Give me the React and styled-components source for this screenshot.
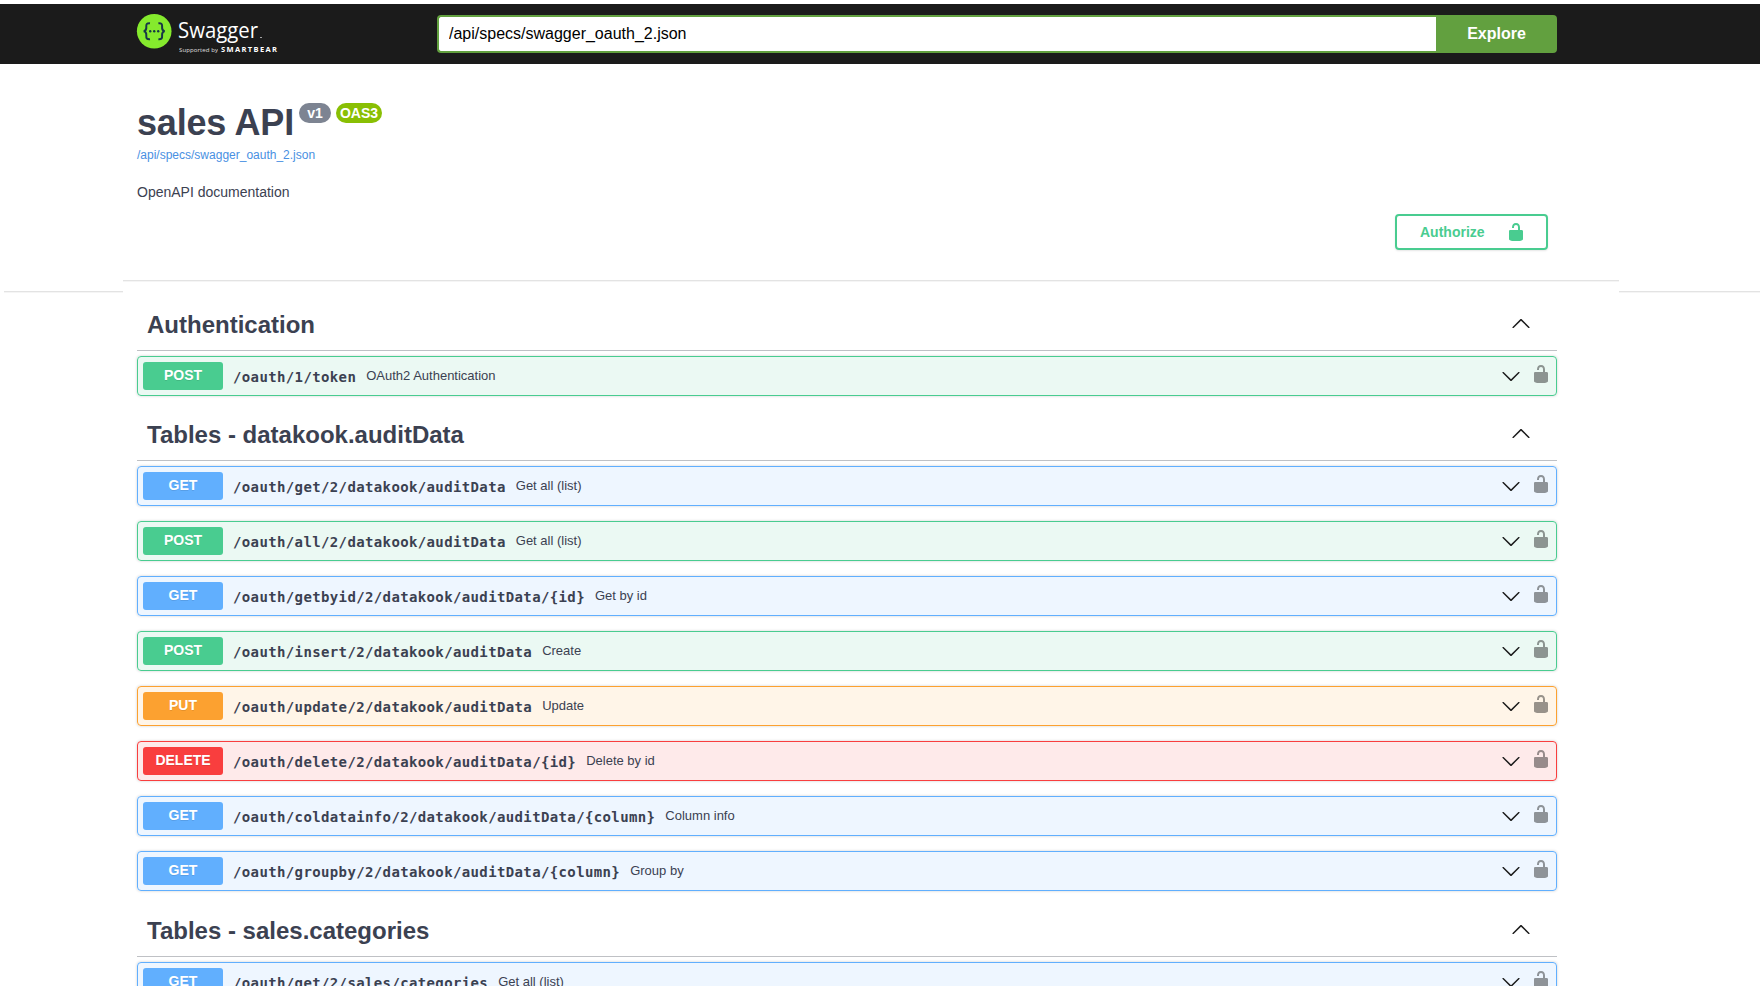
import styled, { createGlobalStyle } from "styled-components";

const GlobalStyle = createGlobalStyle`
    * {
        box-sizing: border-box;
    }
    body {
        margin: 0;
        background: #fff;
        color: #3b4151;
        font-family: "Liberation Sans", Arial, sans-serif;
    }
`

const Page = styled.div`
    height: 990px;
    padding: 4px 0;
    overflow: hidden;
`

const Clip = styled.div`
    height: 982px;
    overflow: hidden;
`

const Topbar = styled.header`
    display: flex;
    align-items: center;
    height: 60px;
    padding: 0 203px 0 136px;
    background: #1b1b1b;
`

const Logo = styled.svg`
    flex: none;
    width: 301px;
    height: 60px;
`

const UrlInput = styled.input`
    flex: 1;
    height: 38px;
    padding: 0 10px 1px;
    border: 2px solid #62a03f;
    border-right: 0;
    border-radius: 4px 0 0 4px;
    outline: none;
    background: #fff;
    color: #000;
    font: 16px "Liberation Sans", Arial, sans-serif;
`

const ExploreButton = styled.button`
    width: 121px;
    height: 38px;
    padding: 0 0 1px;
    border: 0;
    border-radius: 0 4px 4px 0;
    background: #62a03f;
    color: #fff;
    font: bold 16px "Liberation Sans", Arial, sans-serif;
`

const Info = styled.section`
    height: 150px;
    padding: 38px 137px 0;
`

const TitleRow = styled.div`
    display: flex;
    align-items: flex-start;
    height: 42px;
`

const Title = styled.h1`
    margin: 0;
    font-size: 36px;
    line-height: 42px;
    letter-spacing: -0.2px;
`

const Badge = styled.span`
    width: ${props => props.$width}px;
    height: 20px;
    margin: 1px 0 0 5px;
    border-radius: 20px;
    background: ${props => props.$color};
    color: #fff;
    font-size: 14px;
    font-weight: bold;
    line-height: 20px;
    text-align: center;
`

const SpecLink = styled.a`
    display: block;
    margin-top: 4px;
    color: #4990e2;
    font-size: 12px;
    line-height: 14px;
    text-decoration: none;
`

const Description = styled.p`
    margin: 21px 0 0;
    font-size: 14px;
    line-height: 18px;
`

const AuthBar = styled.section`
    display: flex;
    justify-content: flex-end;
    height: 66px;
    padding-right: 212px;
`

const AuthorizeButton = styled.button`
    display: flex;
    align-items: center;
    justify-content: space-between;
    width: 153px;
    height: 36px;
    padding: 0 20px 0 23px;
    border: 2px solid #49cc90;
    border-radius: 4px;
    background: transparent;
    box-shadow: 0 1px 2px rgba(0, 0, 0, 0.1);
    color: #49cc90;
    font: bold 14px/20px "Liberation Sans", Arial, sans-serif;
`

const Divider = styled.div`
    display: grid;
    grid-template-columns: 119px 1496px 1fr;
    height: 13px;
    padding-left: 4px;
`

const Rule = styled.span`
    height: 2px;
    margin-top: ${props => props.$drop}px;
    border-top: 1px solid #e3e3e3;
    border-bottom: 1px solid #f5f5f5;
`

const Operations = styled.main`
    padding: 0 203px 0 137px;
`

const TagHeader = styled.h2`
    display: flex;
    align-items: flex-start;
    justify-content: space-between;
    height: ${props => props.$height}px;
    margin: 0 0 5px;
    padding: 0 26px 0 10px;
    border-bottom: 1px solid #bfc1c5;
    font-size: 24px;
    line-height: 28px;
`

const TagName = styled.span`
    margin-top: auto;
    padding-bottom: 11px;
`

const TagArrow = styled.span`
    display: flex;
    margin-top: auto;
    padding-bottom: 17px;
`

const methodColors = {
    GET: "97, 175, 254",
    POST: "73, 204, 144",
    PUT: "252, 161, 48",
    DELETE: "249, 62, 62",
};

const Row = styled.div`
    display: flex;
    align-items: center;
    height: 40px;
    padding: 0 5px;
    border: 1px solid rgb(${props => methodColors[props.$method]});
    border-radius: 4px;
    background: rgba(${props => methodColors[props.$method]}, 0.11);
    box-shadow: 0 0 3px rgba(0, 0, 0, 0.19);
    & + & {
        margin-top: 15px;
    }
`

const Method = styled.span`
    width: 80px;
    height: 28px;
    border-radius: 3px;
    background: rgb(${props => methodColors[props.$method]});
    color: #fff;
    font-size: 14px;
    font-weight: bold;
    line-height: 27px;
    text-align: center;
    text-shadow: 0 1px 0 rgba(0, 0, 0, 0.1);
`

const Path = styled.span`
    padding: 1px 10px 0;
    font: bold 14px/20px "DejaVu Sans Mono", monospace;
    letter-spacing: 0.37px;
`

const Summary = styled.span`
    flex: 1;
    font-size: 13px;
    line-height: 18px;
`

const LockIcon = styled.span`
    display: flex;
    margin: 0 0 4px 10px;
    opacity: 0.4;
    color: #000;
`

const Arrow = ({ up }) => (
    <svg width="20" height="20" viewBox="0 0 20 20" fill="#1b1b1b">
        {up
            ? <path d="M17.418 14.908c.272.268.709.268.979 0s.271-.701 0-.969l-7.908-7.83c-.27-.268-.707-.268-.979 0l-7.908 7.83c-.27.268-.27.701 0 .969.271.268.709.268.979 0L10 7.767z" />
            : <path d="M17.418 6.109c.272-.268.709-.268.979 0s.271.701 0 .969l-7.908 7.83c-.27.268-.707.268-.979 0l-7.908-7.83c-.27-.268-.27-.701 0-.969.271-.268.709-.268.979 0L10 13.25z" />}
    </svg>
);

const Unlocked = () => (
    <svg width="20" height="20" viewBox="0 0 20 20" fill="currentColor">
        <path d="M15.8 8H14V5.6C14 2.703 12.665 1 10 1 7.334 1 6 2.703 6 5.6V6h2v-.801C8 3.754 8.797 3 10 3c1.203 0 2 .754 2 2.199V8H4c-.553 0-1 .646-1 1.199V17c0 .549.428 1.139.951 1.307l1.197.387C5.672 18.861 6.55 19 7.1 19h5.8c.549 0 1.428-.139 1.951-.307l1.196-.387c.524-.167.953-.757.953-1.306V9.199C17 8.646 16.352 8 15.8 8z" />
    </svg>
);

const SwaggerLogo = () => (
    <Logo viewBox="0 0 301 60">
        <circle cx="18.2" cy="27.2" r="17.3" fill="#85ea2d" />
        <g fill="none" stroke="#173647" strokeWidth="2">
            <path d="M14 19.2c-3.2-.2-3.9.8-3.7 3.6.2 2.8-.2 4-2.6 4.4 2.4.4 2.8 1.600 2.600 4.400-.2 2.800.5 3.800 3.700 3.600" />
            <path d="M22.400 19.200c3.200-.2 3.900.8 3.700 3.600-.2 2.800.2 4 2.600 4.400-2.400.4-2.800 1.600-2.600 4.400.2 2.800-.5 3.800-3.700 3.600" />
        </g>
        <g fill="#173647">
            <circle cx="14.200" cy="27.200" r="1.200" />
            <circle cx="18.200" cy="27.200" r="1.200" />
            <circle cx="22.200" cy="27.200" r="1.200" />
        </g>
        <g fill="#fff" fontFamily="'Open Sans', 'Noto Sans', sans-serif">
            <text x="42" y="34" fontSize="22" textLength="80" lengthAdjust="spacingAndGlyphs">Swagger</text>
            <rect x="124" y="33" width="2" height="1" opacity="0.6" />
            <text x="43" y="48" fontSize="6" textLength="39" opacity="0.85">Supported by</text>
            <text x="85" y="48" fontSize="7.500" fontWeight="bold" textLength="56">SMARTBEAR</text>
        </g>
    </Logo>
);

const tags = [
    {
        name: "Authentication",
        height: 58,
        operations: [
            ["POST", "/oauth/1/token", "OAuth2 Authentication"],
        ],
    },
    {
        name: "Tables - datakook.auditData",
        height: 65,
        operations: [
            ["GET", "/oauth/get/2/datakook/auditData", "Get all (list)"],
            ["POST", "/oauth/all/2/datakook/auditData", "Get all (list)"],
            ["GET", "/oauth/getbyid/2/datakook/auditData/{id}", "Get by id"],
            ["POST", "/oauth/insert/2/datakook/auditData", "Create"],
            ["PUT", "/oauth/update/2/datakook/auditData", "Update"],
            ["DELETE", "/oauth/delete/2/datakook/auditData/{id}", "Delete by id"],
            ["GET", "/oauth/coldatainfo/2/datakook/auditData/{column}", "Column info"],
            ["GET", "/oauth/groupby/2/datakook/auditData/{column}", "Group by"],
        ],
    },
    {
        name: "Tables - sales.categories",
        height: 66,
        operations: [
            ["GET", "/oauth/get/2/sales/categories", "Get all (list)"],
        ],
    },
];

const App = () => {
    return (
    <Page>
        <GlobalStyle />
        <Clip>
            <Topbar>
                <SwaggerLogo />
                <UrlInput type="text" defaultValue="/api/specs/swagger_oauth_2.json" />
                <ExploreButton>Explore</ExploreButton>
            </Topbar>
            <Info>
                <TitleRow>
                    <Title>sales API</Title>
                    <Badge $width={32} $color="#7d8492">v1</Badge>
                    <Badge $width={46} $color="#89bf04">OAS3</Badge>
                </TitleRow>
                <SpecLink href="#">/api/specs/swagger_oauth_2.json</SpecLink>
                <Description>OpenAPI documentation</Description>
            </Info>
            <AuthBar>
                <AuthorizeButton>Authorize <Unlocked /></AuthorizeButton>
            </AuthBar>
            <Divider>
                <Rule $drop={11} />
                <Rule $drop={0} />
                <Rule $drop={11} />
            </Divider>
            <Operations>
                {tags.map(tag => (
                    <section key={tag.name}>
                        <TagHeader $height={tag.height}>
                            <TagName>{tag.name}</TagName>
                            <TagArrow><Arrow up /></TagArrow>
                        </TagHeader>
                        {tag.operations.map(([method, path, summary]) => (
                            <Row key={path} $method={method}>
                                <Method $method={method}>{method}</Method>
                                <Path>{path}</Path>
                                <Summary>{summary}</Summary>
                                <Arrow />
                                <LockIcon><Unlocked /></LockIcon>
                            </Row>
                        ))}
                    </section>
                ))}
            </Operations>
        </Clip>
    </Page>
    );
}

export default App;
